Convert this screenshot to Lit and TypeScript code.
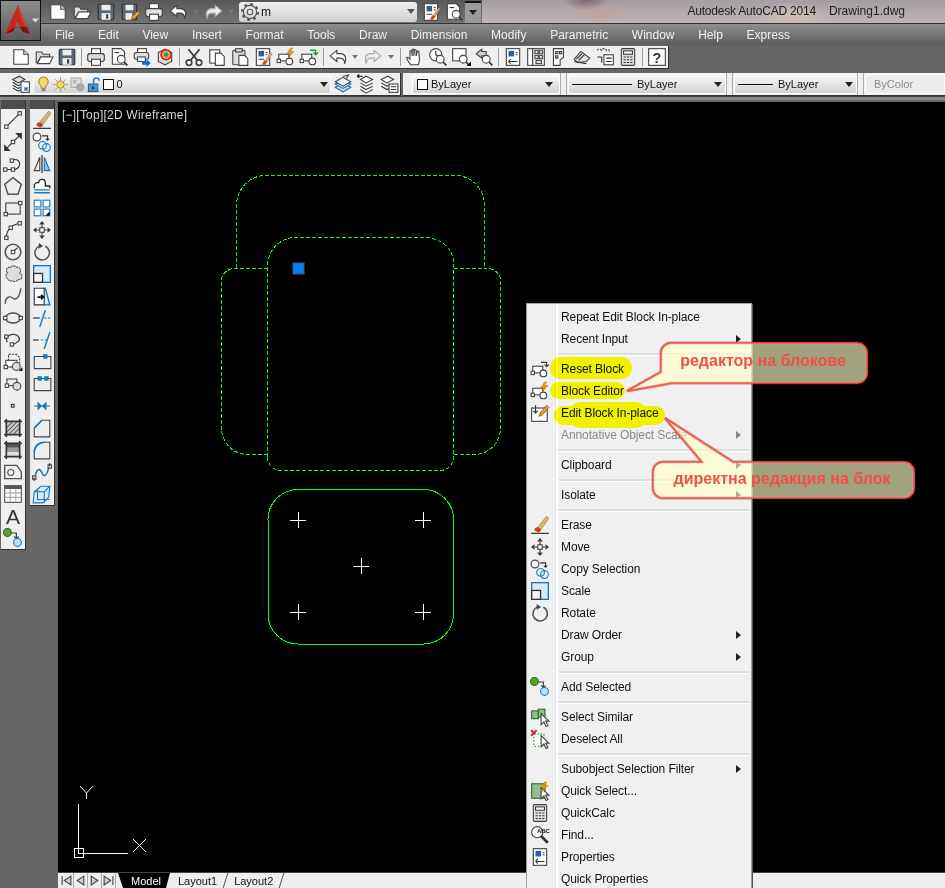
import { LitElement, css, html, svg, TemplateResult } from 'lit';
import { customElement } from 'lit/decorators.js';

const n = (x: number, y: number) => svg`<rect class="w" x=${x - 1.5} y=${y - 1.5} width="3" height="3" />`;
const lens = svg`<circle class="w" cx="11" cy="11" r="3.5" /><path class="k2" d="M13.5 13.5l3 3" />`;
const cursor = svg`<path class="w" d="M10 6v10l2.5-2.5 2 4 1.6-.8-2-4H17z" />`;
const sheet = svg`<rect class="w" x="3" y="1.5" width="12" height="15" /><rect x="5" y="3.5" width="5" height="5" fill="#2a5f9e" />`;
const brush = svg`<path d="M9 15l2-3 5-7 1 1-4 7z" fill="#d9b27a" stroke="#8a6a3a" stroke-width=".5" /><path d="M8 16l2-4 3 1-2 3z" fill="#c8501a" />`;
const bolt = svg`<path d="M13 1l-3 5h3l-2 4 5-6h-3l2-3z" fill="#f0a010" stroke="#b86a00" stroke-width=".5" />`;

const ICONS: Record<string, TemplateResult> = {
  new: svg`<path class="w" d="M2.5 2.5h9l4 4v9h-13z" /><path class="g" d="M11.5 2.5v4h4" />`,
  open: svg`<path class="g" d="M2 14V4.5h5l1 2h6V9H6l-3 5z" /><path class="w" d="M3 15l3-6h11l-3 6z" />`,
  save: svg`<rect x="2" y="2" width="14" height="14" rx="1" fill="#59697a" stroke="#333" /><rect x="5" y="2.5" width="8" height="5" fill="#eee" /><rect x="5" y="10" width="8" height="6" fill="#eee" /><rect x="9" y="11" width="2" height="4" fill="#444" />`,
  saveas: svg`<rect x="2" y="2" width="13" height="14" rx="1" fill="#59697a" stroke="#333" /><rect x="5" y="2.5" width="7" height="5" fill="#eee" /><rect x="5" y="10" width="6" height="6" fill="#eee" /><path d="M10 16l1-3 5-5 2 2-5 5z" fill="#e8a030" stroke="#7a4a10" stroke-width=".6" />`,
  print: svg`<rect class="w" x="5" y="1.5" width="8" height="5" /><rect class="g" x="1.5" y="6" width="15" height="7" rx="2" /><rect class="w" x="5" y="11" width="8" height="5.5" />`,
  undo: svg`<path class="w" d="M8 3L2 8l6 5v-3h3c2 0 4 1 4 5 2-4 1-9-4-9H8z" />`,
  redo: svg`<path d="M10 3l6 5-6 5v-3H7c-2 0-4 1-4 5-2-4-1-9 4-9h3z" fill="#eee" stroke="#aaa" />`,
  gear: svg`<circle cx="9" cy="9" r="7" fill="none" stroke="#555" stroke-width="2.2" stroke-dasharray="2.4 3.1" /><circle cx="9" cy="9" r="6" style="fill:none;stroke:#555" /><circle cx="9" cy="9" r="2.5" style="fill:none;stroke:#555" />`,
  match: svg`${sheet}<path class="k" d="M11.5 5H13M11.5 7H13M5 11h5" />${brush}`,
  preview: svg`<path class="w" d="M3 1.5h8l3 3v11H3z" /><path class="k" d="M5 5h4" />${lens}`,
  publish: svg`<rect class="w" x="5" y="1.5" width="8" height="4" /><rect class="g" x="2" y="5" width="13" height="6" rx="2" /><rect class="w" x="5" y="9" width="7" height="4" /><path d="M9 13h4v-2l4 3.5-4 3.5v-2H9z" fill="#1a6fc0" />`,
  dwf: svg`<path class="g" d="M3 5l6-3 6 3v8l-6 3-6-3z" /><circle cx="10" cy="7" r="4.5" fill="#f0b020" stroke="#d02020" stroke-width="1.4" /><circle cx="10" cy="7" r="2" fill="#2a80d0" />`,
  cut: svg`<path class="k2" d="M4 2l8 10M14 2L6 12" /><circle cx="4.5" cy="14" r="2.5" class="w" style="stroke-width:1.6" /><circle cx="13.5" cy="14" r="2.5" class="w" style="stroke-width:1.6" />`,
  copy: svg`<rect class="w" x="2.5" y="2.5" width="9" height="12" /><path class="w" d="M7.5 5.5h5l3 3v8h-8z" />`,
  paste: svg`<rect class="g" x="2.5" y="3" width="11" height="13" rx="1" /><rect class="g" x="5" y="1.5" width="6" height="3" /><path class="w" d="M8 7.5h5l3 3v6H8z" />`,
  bedit: svg`<rect class="w" x="2.5" y="6.5" width="9" height="6" /><circle class="w" cx="12" cy="13" r="3" />${n(2.5, 12.5)}${bolt}`,
  breset: svg`<rect class="w" x="2.5" y="6.5" width="9" height="6" /><circle class="w" cx="12" cy="13" r="3" />${n(2.5, 12.5)}<path d="M10 3h5v3m-2-1l2 2 2-2" fill="none" stroke="#2a9a30" stroke-width="1.3" />`,
  resetm: svg`<rect class="w" x="2.5" y="6.5" width="9" height="6" /><circle class="w" cx="12" cy="13" r="3" />${n(2.5, 12.5)}<path class="k" d="M10 3h5v3m-2-1l2 2 2-2" />`,
  refedit: svg`<rect class="w" x="1.5" y="4.5" width="14" height="12" /><path class="k" d="M5 2v7m-2-2l2 2 2-2" /><path d="M8 12l1-3 6-7 2 2-6 7z" fill="#e0a030" stroke="#7a4a10" stroke-width=".6" />`,
  pan: svg`<path class="w" d="M5 16c-1-2-3-4-3.500-6 0-1 1-1 2 0l1 1V4c0-1 1.500-1 1.500 0l.5 4V2.500c0-1 1.500-1 1.500 0V8l.5-5c0-1 1.500-1 1.500 0l0 5 1-3.500c0-1 1.500-1 1.500 0L13 11c0 2-.5 3.500-1 5z" />`,
  zoomrt: svg`<circle class="w" cx="7" cy="7" r="5.500" /><path class="k" d="M7 3.500V7l2.500 1" />${lens}`,
  zoomwin: svg`<rect class="w" x="1.500" y="1.500" width="12" height="11" />${lens}<path d="M14 17l4-4v4z" fill="#111" />`,
  zoomprev: svg`<path d="M2 6l5-4v2h4v4H7v2z" fill="#ccc" stroke="#444" />${lens}`,
  props: svg`${sheet}<path class="k" d="M11.500 5H13M11.500 7H13M5 13h8M5 13l2-2M5 13l2 2" />`,
  dc: svg`<rect class="w" x="1.500" y="1.500" width="15" height="15" /><path class="k" d="M6 1.500v15" /><rect class="g" x="8" y="3" width="3" height="3" /><rect class="g" x="12" y="3" width="3" height="3" /><rect class="g" x="8" y="7.500" width="3" height="3" /><rect class="g" x="12" y="7.500" width="3" height="3" /><rect class="g" x="9" y="12" width="5" height="3" />`,
  palette: svg`<path class="w" d="M4 1.500h9v8l-3 2v5H4z" /><path class="g" d="M6 4h2v2H6zM9.500 4h2v2h-2zM6 8h2v2H6z" />`,
  sheetset: svg`<path class="g" d="M2 11l6-7 8 6-3 3-8 1z" /><path class="k" d="M4 11l5-5M6 12l5-5M2 13l11 2" />`,
  markup: svg`<path d="M2 3c1-2 3-1 4 0 1-2 3-2 4 0 1-1 3-1 3 1" fill="none" stroke="#444" stroke-dasharray="2 1" /><rect class="w" x="8" y="7" width="8.500" height="9" /><path class="k" d="M10 10h5M10 13h5M2 9h4v5" />`,
  calc: svg`<rect class="g" x="3" y="1.500" width="12" height="15" rx="1" /><rect class="w" x="5" y="3.500" width="8" height="3" /><path class="k" stroke-dasharray="2 1" d="M5 9h8M5 11.500h8M5 14h8" />`,
  help: svg`<rect class="w" x="1.500" y="1.500" width="15" height="15" /><text x="9" y="14" text-anchor="middle" font-size="13" font-weight="700" font-family="Liberation Sans" fill="#333">?</text>`,
  layerprops: svg`<path class="g" d="M1.500 5l6-3 5 3-6 3z" /><path class="k" d="M1.500 7.500l5 3 2-1M1.500 10l5 3 2-1M1.500 12.500l5 3 2-1" /><rect class="w" x="9" y="7" width="7.500" height="9.500" /><rect x="12" y="12" width="3" height="3" fill="#2a6fb8" />`,
  bulb: svg`<path d="M9 1a5 5 0 0 1 3 9l-1 3H7l-1-3a5 5 0 0 1 3-9z" fill="#f5d96a" stroke="#8a7a30" /><rect x="7" y="13" width="4" height="3" fill="#888" />`,
  sun: svg`<circle cx="9" cy="9" r="4" fill="#f6d65a" stroke="#9a8a40" /><path d="M9 1v3M9 14v3M1 9h3M14 9h3M3.500 3.500l2 2M12.500 12.500l2 2M3.500 14.500l2-2M12.500 5.500l2-2" stroke="#b09a50" />`,
  freeze: svg`<rect x="2" y="2" width="11" height="10" fill="#ddd" stroke="#aaa" /><rect x="4" y="4" width="4" height="4" fill="#bbb" /><circle cx="12" cy="12" r="4" fill="#aaa" stroke="#999" stroke-dasharray="2 1" />`,
  lock: svg`<path d="M8 9V5a3 3 0 0 1 6 0" fill="none" stroke="#2a7fc9" stroke-width="1.600" /><rect x="2.500" y="8.500" width="10" height="8" fill="#4a94d0" stroke="#1a5a98" /><rect x="6.500" y="11" width="2" height="3" fill="#0d3a68" />`,
  layerblue: svg`<path d="M2 12l7-4 7 4-7 4z" fill="#bfe0f8" stroke="#1a6fc0" /><path d="M2 9l7-4 7 4-7 4z" fill="#dff0fc" stroke="#1a6fc0" /><path d="M2 7l7-4 7 4-7 4z" fill="#eaf6ff" stroke="#444" /><path d="M9 2l5-1-2 3" fill="none" stroke="#444" />`,
  layerprev: svg`<path d="M4 5l5 3 6-3-6-3z M4 8l5 3 6-3M4 11l5 3 6-3M4 14l5 3 6-3" class="g" style="fill:#fff" /><path d="M1 2h5M1 2l2-1.500M1 2l2 1.500" stroke="#111" fill="none" />`,
  layerstate: svg`<path class="w" d="M2 5l6-3 5 3-6 3z" /><path class="k" d="M2 8l5 3 2-1M2 11l5 3 2-1" /><rect class="w" x="9" y="9" width="8" height="7.500" /><path class="k" d="M10.500 11.500h5M10.500 14h5" />`,

  line: svg`<path class="k" d="M3 15L15 3" />${n(3, 15)}${n(15, 3)}`,
  xline: svg`<path class="k" d="M3 15L15 3" /><path d="M1 17v-6l6 6zM17 1v6l-6-6z" fill="#333" />${n(9, 9)}`,
  pline: svg`<path class="k" d="M2 14h7c2 0 6-1 6-5s-5-5-7-3" />${n(2, 14)}${n(9, 14)}${n(8, 6)}`,
  polygon: svg`<path d="M9 1.500l7.500 6-3 9h-9l-3-9z" fill="#eee" stroke="#555" stroke-width="1.300" />`,
  rect: svg`<rect class="g" x="2.500" y="4.500" width="13" height="10" style="fill:#eee" />${n(2.5, 14.5)}${n(15.5, 4.5)}`,
  arc: svg`<path class="k" d="M3 16C3 9 8 4 15 3" />${n(3, 16)}${n(7, 7)}${n(15, 3)}`,
  circle: svg`<circle cx="9" cy="9" r="7" fill="#eee" stroke="#555" stroke-width="1.400" /><path class="k" d="M9 9l4-4" />${n(9, 9)}`,
  cloud: svg`<path d="M4 8a3 3 0 0 1 3-5 3 3 0 0 1 5 0 3 3 0 0 1 3 5 3 3 0 0 1-2 6 3 3 0 0 1-5 1 3 3 0 0 1-4-2 3 3 0 0 1 0-5z" fill="#ddd" stroke="#555" stroke-dasharray="2 .6" />`,
  spline: svg`<path d="M2 16C2 9 7 9 9 11s6 0 7-9" fill="none" stroke="#555" stroke-width="1.300" />`,
  ellipse: svg`<ellipse cx="9" cy="9" rx="7" ry="4.500" fill="#eee" stroke="#444" stroke-width="1.200" />${n(2, 9)}${n(16, 9)}`,
  ellarc: svg`<path d="M4 11C1 7 6 3.500 10 4s6 4 4 6-4 3-6 3" fill="none" stroke="#444" stroke-width="1.200" />${n(3, 6)}${n(8, 13)}`,
  insert: svg`<path class="k" d="M5 8V2h7l3 3v5" stroke-dasharray="2 1" /><rect class="w" x="2.500" y="7.500" width="10" height="6" /><circle class="g" cx="12" cy="13" r="3.500" />${n(2.5, 13.5)}<path d="M14 17l3.500-3.500V17z" fill="#111" />`,
  block: svg`<rect class="g" x="3.500" y="4.500" width="9" height="6" style="fill:#eee" /><circle class="g" cx="12.500" cy="11" r="3.500" />${n(3.5, 10.5)}`,
  point: svg`<rect x="7.500" y="7.500" width="2.500" height="2.500" fill="#eee" stroke="#333" />`,
  hatch: svg`<rect x="3" y="3" width="12" height="12" fill="#ccc" /><path stroke="#666" d="M3 9l6-6M3 13l10-10M5 15L15 5M9 15l6-6" /><path class="k2" d="M1 3h16M1 15h16M3 1v16M15 1v16" />`,
  gradient: svg`<rect x="3" y="3" width="12" height="4" fill="#555" /><rect x="3" y="7" width="12" height="4" fill="#999" /><rect x="3" y="11" width="12" height="4" fill="#ddd" /><path class="k2" d="M1 3h16M1 15h16M3 1v16M15 1v16" />`,
  region: svg`<path d="M1.500 3h11l4 6v6h-15z" fill="#eee" stroke="#555" stroke-width="1.200" /><circle cx="7" cy="9.500" r="2.700" fill="#fff" stroke="#555" />`,
  table: svg`<rect x="1.500" y="1.500" width="15" height="15" fill="#fff" stroke="#555" /><rect x="1.500" y="1.500" width="15" height="3" fill="#555" /><path d="M1.500 8h15M1.500 12h15M6.500 4.500v12M11.500 4.500v12" stroke="#aaa" fill="none" />`,
  a: svg`<text x="9" y="16" text-anchor="middle" font-size="19" font-family="Liberation Sans" fill="#333">A</text>`,
  addsel: svg`<circle cx="4" cy="4" r="3.500" fill="#5aa032" stroke="#2a6a10" /><path class="k" d="M8 4.500h4v5m-2-2l2 2 2-2" /><circle cx="13" cy="13" r="3.500" fill="#bfe0f8" stroke="#1a78c2" />`,

  erase: svg`<path d="M7 11L15 1l2 2-7 10z" fill="#d9b27a" stroke="#8a6a3a" stroke-width=".5" /><path d="M4 14c0-2 1-3 3-3l3 2c0 2-2 2.500-3 2.500z" fill="#c8401a" /><path stroke="#222" d="M1 16.500h16" />`,
  copyobj: svg`<circle class="g" cx="4.500" cy="4.500" r="3.500" style="fill:#fff" /><path class="k" d="M9 3.500h5v4m-1.500-1.500l1.500 1.500 1.500-1.500" /><circle class="b" cx="9.500" cy="12" r="3.500" /><circle class="b" cx="13" cy="14" r="3.500" />`,
  mirror: svg`<path d="M7 3v12H2z" fill="#eee" stroke="#444" /><path d="M11 3v12h5z" fill="#8ec2ea" stroke="#1a78c2" /><path d="M9 1v16" stroke="#222" />`,
  offset: svg`<path d="M2 11V9a3 3 0 0 1 3-3h1a3 3 0 0 1 6 0v3h4v2" fill="#fff" stroke="#222" stroke-width="1.200" /><path class="b" d="M2 15h14M2 12.500h14" style="stroke-width:1.300" />`,
  array: svg`<rect class="b" x="2" y="2" width="6" height="6" style="fill:#fff" /><rect class="b" x="10" y="2" width="6" height="6" style="fill:#fff" /><rect class="b" x="2" y="10" width="6" height="6" style="fill:#fff" /><rect class="b" x="10" y="10" width="6" height="6" style="fill:#fff" /><path d="M12 16l4-4v4z" fill="#111" />`,
  move: svg`<path d="M9 1l2.500 3h-5zM9 17l2.500-3h-5zM1 9l3-2.500v5zM17 9l-3-2.500v5z" fill="#333" /><rect x="7" y="7" width="4" height="4" class="w" /><path class="k" d="M9 4v3M9 11v3M4 9h3M11 9h3" />`,
  rotate: svg`<path d="M7 3.500a6.500 6.500 0 1 0 5 .3" fill="none" stroke="#555" stroke-width="1.400" /><path d="M6 1l4 2.500-4 2.500z" fill="#444" />`,
  scale: svg`<rect class="b" x="1.500" y="1.500" width="15" height="15" style="fill:#d8ebf8;stroke-width:1.200" /><rect x="1.500" y="8.500" width="8" height="8" fill="#f4f4f4" stroke="#333" stroke-width="1.200" />`,
  stretch: svg`<path class="b" d="M11 2h1l4 15H11" style="stroke-width:1.200;fill:#d8ebf8" /><path d="M2 2h9v15H2z" fill="#fff" stroke="#333" /><path d="M5 10h5m-2-2l2.500 2L8 12" stroke="#111" stroke-width="1.500" fill="none" />`,
  trim: svg`<path class="b" d="M7 17L12 2" style="stroke-width:1.300" /><path d="M1 9h6" stroke="#222" /><path d="M11 9h6" stroke="#1a78c2" stroke-dasharray="2 1.500" />`,
  extend: svg`<path class="b" d="M11 17L16 2" style="stroke-width:1.300" /><path d="M1 9h5" stroke="#222" /><path d="M8 9h6" stroke="#1a78c2" stroke-dasharray="2 1.500" />`,
  breakpt: svg`<path d="M2 4v11h15V4z" fill="#eee" stroke="#444" /><rect x="10" y="2" width="4" height="4" fill="#1a78c2" />`,
  break: svg`<path d="M2 4v11h15V4z" fill="#eee" stroke="#444" /><rect x="5" y="2" width="4" height="4" fill="#1a78c2" /><rect x="11" y="2" width="4" height="4" fill="#1a78c2" />`,
  join: svg`<path d="M2 9h14" stroke="#1a78c2" /><path d="M5 5l4 4-4 4zM13 5L9 9l4 4z" fill="#1a78c2" />`,
  chamfer: svg`<path d="M2 9l7-7h7v15H2z" fill="#eee" stroke="#444" /><path class="b" d="M2 9l7-7" style="stroke-width:1.500" />`,
  fillet: svg`<path d="M2 11C2 6 6 2 11 2h5v15H2z" fill="#eee" stroke="#444" /><path class="b" d="M2 11C2 6 6 2 11 2" style="stroke-width:1.500" />`,
  blend: svg`<path class="b" d="M3 12c2-8 5-5 6-2s4 4 6-5" style="stroke-width:1.400" />${n(2, 14)}${n(16, 4)}<path class="k" d="M2 14v3M16 4V1" />`,
  explode: svg`<path class="b" d="M2 7l6-5h8l-1 10-5 5H1z M2 7h9v10M11 7l5-5" style="fill:#d8ebf8" /><path class="b" d="M5 4v10h11" />`,
  selsim: svg`<rect x="1.500" y="3.500" width="6" height="7" fill="#8fc08f" stroke="#2a6a2a" /><rect x="7.500" y="2" width="6" height="7" fill="#8fc08f" stroke="#2a6a2a" />${cursor}`,
  desel: svg`<path d="M1 1l5 5M6 1L1 6" stroke="#d02020" stroke-width="1.800" /><rect x="3.500" y="4.500" width="9" height="11" fill="#fff" stroke="#2a8a2a" stroke-dasharray="1.500 1.500" />${cursor}`,
  qselect: svg`<rect x="1.500" y="2.500" width="12" height="13" fill="#8fc08f" stroke="#2a6a2a" />${cursor}${bolt}`,
  find: svg`<circle class="w" cx="6.500" cy="6.500" r="5" /><path class="k2" d="M10 10l6 6" style="stroke-width:2.500" /><text x="12" y="7" text-anchor="middle" font-size="5.500" font-weight="700" font-family="Liberation Sans" fill="#111">ABC</text>`,
};

const icon = (name: string) => html`<svg class="ic" viewBox="0 0 18 18">${ICONS[name]}</svg>`;

const QAT = ['new', 'open', 'save', 'saveas', 'print', 'undo', 'v', 'redo', 'v'];
const ROW1 = ['new', 'open', 'save', '|', 'print', 'preview', 'publish', 'dwf', '|', 'cut', 'copy', 'paste', 'match', 'bedit', 'breset', '|', 'undo', 'v', 'redo', 'v', '|', 'pan', 'zoomrt', 'zoomwin', 'zoomprev', '|', 'props', 'dc', 'palette', 'sheetset', 'markup', 'calc', '|', 'help'];
const DRAW = ['line', 'xline', 'pline', 'polygon', 'rect', 'arc', 'circle', 'cloud', 'spline', 'ellipse', 'ellarc', 'insert', 'block', 'point', 'hatch', 'gradient', 'region', 'table', 'a', 'addsel'];
const MODIFY = ['erase', 'copyobj', 'mirror', 'offset', 'array', 'move', 'rotate', 'scale', 'stretch', 'trim', 'extend', 'breakpt', 'break', 'join', 'chamfer', 'fillet', 'blend', 'explode'];
const MENUS = ['File', 'Edit', 'View', 'Insert', 'Format', 'Tools', 'Draw', 'Dimension', 'Modify', 'Parametric', 'Window', 'Help', 'Express'];
const GRIPS: [number, number][] = [[298, 520], [423, 520], [361, 566], [298, 612], [423, 612]];

type Item = { label?: string; icon?: string; sub?: boolean; off?: boolean };
const CONTEXT: Item[] = [
  { label: 'Repeat Edit Block In-place' },
  { label: 'Recent Input', sub: true },
  {},
  { label: 'Reset Block', icon: 'resetm' },
  { label: 'Block Editor', icon: 'bedit' },
  { label: 'Edit Block In-place', icon: 'refedit' },
  { label: 'Annotative Object Scale', sub: true, off: true },
  {},
  { label: 'Clipboard', sub: true },
  {},
  { label: 'Isolate', sub: true },
  {},
  { label: 'Erase', icon: 'erase' },
  { label: 'Move', icon: 'move' },
  { label: 'Copy Selection', icon: 'copyobj' },
  { label: 'Scale', icon: 'scale' },
  { label: 'Rotate', icon: 'rotate' },
  { label: 'Draw Order', sub: true },
  { label: 'Group', sub: true },
  {},
  { label: 'Add Selected', icon: 'addsel' },
  {},
  { label: 'Select Similar', icon: 'selsim' },
  { label: 'Deselect All', icon: 'desel' },
  {},
  { label: 'Subobject Selection Filter', sub: true },
  { label: 'Quick Select...', icon: 'qselect' },
  { label: 'QuickCalc', icon: 'calc' },
  { label: 'Find...', icon: 'find' },
  { label: 'Properties', icon: 'props' },
  { label: 'Quick Properties' },
];

@customElement('app-root')
export class AppRoot extends LitElement {
  static styles = css`
    :host {
      display: block;
      position: relative;
      width: 945px;
      height: 888px;
      overflow: hidden;
      background: #666;
      color: #111;
      font: 12px 'Liberation Sans', Arial, sans-serif;
    }

    .ic { width: 20px; height: 20px; display: block; flex: none; overflow: visible; }
    .k { fill: none; stroke: #333; }
    .k2 { fill: none; stroke: #333; stroke-width: 1.5; }
    .w { fill: #fff; stroke: #444; }
    .g { fill: #ddd; stroke: #444; }
    .b { fill: none; stroke: #1a78c2; }

    .titlebar { height: 24px; display: flex; padding-left: 41px; }
    .qat {
      width: 441px;
      display: flex;
      align-items: center;
      padding-left: 5px;
      box-sizing: border-box;
      background: linear-gradient(#585858, #747474);
      border-bottom: 1px solid #333;
    }
    .qat .btn { width: 24px; }
    .qat .drop { width: 11.5px; }
    .qat .wsp ~ .btn { width: 23px; }
    .caption {
      flex: 1;
      display: flex;
      align-items: center;
      justify-content: flex-end;
      gap: 13px;
      padding: 0 40px 2px 0;
      color: #222;
      border-bottom: 1px solid #333;
      background:
        radial-gradient(24px 10px at 104px 0, #7f6570, transparent),
        radial-gradient(34px 12px at 118px 14px, #bfa49c, transparent),
        radial-gradient(40px 14px at 310px 16px, #d2bfb4, transparent),
        linear-gradient(#a59ca2, #bdb6ba);
    }
    .caption span:first-child { letter-spacing: -0.2px; }
    .wsp {
      width: 178px;
      height: 20px;
      margin: 0 2px;
      display: flex;
      align-items: center;
      gap: 1px;
      padding-left: 1px;
      box-sizing: border-box;
      border-radius: 3px;
      background: linear-gradient(#f0f0f0, #cfcfcf);
    }
    .grow { flex: 1; }
    .caret { width: 0; height: 0; border: 4px solid transparent; border-top: 5px solid #222; border-bottom: 0; }
    .wsp .caret { margin-right: 2px; border-top-color: #555; }
    .qatmore {
      width: 16px;
      height: 22px;
      display: grid;
      place-items: center;
      box-sizing: border-box;
      border-top: 2px solid #111;
      background: #9a9a9a;
    }

    .logo {
      position: absolute;
      left: 0;
      top: 0;
      width: 41px;
      height: 41px;
      box-sizing: border-box;
      border: 1px solid #111;
      background: linear-gradient(#8e8e8e, #5a5a5a);
    }

    .menubar {
      height: 21px;
      padding-left: 55px;
      display: flex;
      align-items: center;
      gap: 23.7px;
      color: #f0f0f0;
      background: linear-gradient(#8f8f8f, #5c5c5c);
    }

    .row { display: flex; }
    .row1 { height: 25px; padding-top: 1px; box-sizing: border-box; }
    .row2 { height: 26px; padding-top: 3px; gap: 2px; box-sizing: border-box; }
    .bar {
      display: flex;
      align-items: center;
      height: 22px;
      background: #efefef;
      border-right: 1px solid #333;
      border-bottom: 1px solid #333;
    }
    .grip {
      width: 4px;
      height: 18px;
      margin: 0 3px 0 2px;
      flex: none;
      background: radial-gradient(circle, #555 45%, transparent 50%) 0 0 / 2px 2px;
    }
    .btn { width: 23px; height: 22px; display: grid; place-items: center; flex: none; }
    .sep { width: 6px; display: grid; place-items: center; flex: none; }
    .sep::before { content: ''; width: 1px; height: 18px; background: #999; }
    .drop { width: 12.5px; height: 22px; display: grid; place-items: center; flex: none; }
    .drop .caret { border-top-color: #777; border-width: 3px; border-top-width: 4px; border-bottom: 0; }

    .combo {
      height: 20px;
      display: flex;
      align-items: center;
      box-sizing: border-box;
      padding: 0 6px 0 4px;
      border-radius: 3px;
      font-size: 11px;
      background: linear-gradient(#f8f8f8, #d2d2d2);
      border: 1px solid #fff;
    }
    .combo .ic { width: 17px; height: 17px; }
    .combo.layer { width: 298px; margin-left: 1px; padding: 0 2px 0 0.5px; }
    .combo.color { width: 148px; }
    .combo.ltype { width: 158px; padding: 0 3px; }
    .combo.lweight { width: 123px; padding: 0 3px; }
    .combo.plot { width: 80px; padding-left: 8px; color: #8a8a8a; background: #ececec; border-radius: 3px 0 0 3px; }
    .swatch { width: 11px; height: 11px; box-sizing: border-box; border: 1px solid #111; background: #fff; margin-right: 3px; flex: none; }
    .rule { height: 1px; background: #111; flex: none; margin-right: 5px; }
    .ltype .rule { width: 60px; }
    .lweight .rule { width: 35px; }
    .div {
      width: 8px;
      height: 22px;
      flex: none;
      background: linear-gradient(90deg, #aaa 1px, #efefef 1px, #efefef 6px, #aaa 6px, #aaa 7px, #efefef 7px);
    }
    .bars2 { flex: 1; border-right: 0; }

    .strip { height: 4px; background: #8b8b8b; border-top: 1px solid #444; box-sizing: border-box; }

    .main { display: flex; height: 788px; }
    .dock { width: 58px; padding-left: 1px; display: flex; gap: 4px; align-items: flex-start; box-sizing: border-box; flex: none; }
    .vbar { width: 24px; background: #efefef; border-right: 1px solid #333; border-bottom: 1px solid #333; flex: none; box-sizing: content-box; }
    .vhead {
      height: 9px;
      background: #4c4c4c;
      display: grid;
      place-items: center;
    }
    .vhead::before {
      content: '';
      width: 14px;
      height: 3px;
      background: radial-gradient(circle, #bbb 40%, transparent 50%) 0 0 / 2px 2px;
    }
    .vitem { height: 22px; display: grid; place-items: center; }

    .work { flex: 1; display: flex; flex-direction: column; padding-top: 2px; min-width: 0; }
    .canvas { position: relative; flex: 1; background: #000; overflow: hidden; }
    .canvas svg { display: block; position: absolute; inset: 0; }
    .view {
      position: absolute;
      left: 4px;
      top: 6px;
      color: #d4d4d4;
      white-space: pre;
      letter-spacing: 0.22px;
    }

    .tabs {
      height: 15px;
      display: flex;
      align-items: stretch;
      padding-left: 2px;
      background: #eee;
      border-top: 1px solid #444;
      font-size: 11px;
    }
    .nav { width: 14px; display: grid; place-items: center; border-right: 1px solid #aaa; box-sizing: border-box; }
    .nav svg { width: 11px; height: 11px; }
    .tab { position: relative; display: flex; align-items: center; padding: 0 9px 0 8px; }
    .tab.on { background: #000; color: #fff; margin-left: 2px; padding: 0 9px 0 13px; clip-path: polygon(0 0, 100% 0, calc(100% - 4px) 100%, 5px 100%); }
    .tab:not(.on)::after {
      content: '';
      position: absolute;
      right: 0;
      top: 0;
      bottom: 0;
      width: 1px;
      background: #555;
      transform: skewX(-17deg);
    }

    .ctx {
      position: absolute;
      left: 526px;
      top: 303px;
      width: 226px;
      height: 600px;
      box-sizing: border-box;
      padding-top: 2px;
      letter-spacing: -0.1px;
      background: #f0f0f0;
      border: 1px solid #a0a0a0;
      box-shadow: 1px 1px 0 #555;
    }
    .ctx::before {
      content: '';
      position: absolute;
      left: 28px;
      top: 0;
      bottom: 0;
      width: 2px;
      background: #fff;
      border-left: 1px solid #e2e2e2;
    }
    .mi { height: 22px; display: flex; align-items: center; position: relative; }
    .mi .slot { width: 34px; padding-left: 3px; box-sizing: border-box; flex: none; }
    .mi.off { color: #8a8a8a; }
    .mi .tri { position: absolute; right: 10px; top: 7px; width: 0; height: 0; border: 4px solid transparent; border-left: 5px solid #222; border-right: 0; }
    .mi.off .tri { border-left-color: #888; }
    .ms { height: 8px; margin-left: 30px; display: flex; align-items: center; margin-right: 2px; }
    .ms::before { content: ''; flex: 1; height: 2px; background: #dedede; border-bottom: 1px solid #fff; }

    .marks, .notes { position: absolute; left: 0; top: 0; pointer-events: none; }
    .marks { mix-blend-mode: multiply; }
    .notes text { font: bold 16px 'Liberation Sans', Arial, sans-serif; fill: #ef5148; text-anchor: middle; }
    .box { fill: rgba(255, 255, 200, 0.63); stroke: #ef5a50; stroke-width: 1.5; }
    .edge { fill: none; stroke: rgba(190, 20, 20, 0.5); stroke-width: 3; }
  `;

  private bar(items: string[]) {
    return items.map((it) => {
      if (it === '|') return html`<span class="sep"></span>`;
      if (it === 'v') return html`<span class="drop"><span class="caret"></span></span>`;
      return html`<span class="btn">${icon(it)}</span>`;
    });
  }

  private drawing() {
    return html`<svg width="887" height="771" viewBox="58 102 887 771">
      <g fill="none" stroke="#0f0" stroke-dasharray="4 2" shape-rendering="crispEdges">
        <path d="M236.500 268V205A29 30 0 0 1 265.500 175.500H455.500A29 30 0 0 1 484.500 205V268" />
        <path d="M268 268.500H235A13.500 12 0 0 0 221.500 280.500V428A26 26.500 0 0 0 247.500 454.500H268" />
        <path d="M453.500 268.500H487A13.500 12 0 0 1 500.500 280.500V428A26 26.500 0 0 1 474.500 454.500H453.500" />
        <path d="M267.500 457V266A28 28.500 0 0 1 295.500 237.500H424A29.500 25 0 0 1 453.500 262.500V457A13.500 13.500 0 0 1 440 470.500H281A13.500 13.500 0 0 1 267.500 457Z" />
      </g>
      <rect x="293" y="263" width="11" height="11" fill="#0080ff" stroke="#555" />
      <rect x="268" y="489.500" width="185.500" height="154.500" rx="30" fill="none" stroke="#0f0" shape-rendering="crispEdges" />
      <g stroke="#fff" fill="none" shape-rendering="crispEdges">
        ${GRIPS.map(([x, y]) => svg`<path d="M${x - 8} ${y + 0.5}h16M${x + 0.5} ${y - 8}v16" />`)}
        <path d="M78.500 804V853H128M74.500 848.500h9v9h-9z" />
      </g>
      <g stroke="#fff" fill="none">
        <path d="M80 786l6.500 7 6.500-7M86.500 793v6M133 839l13 13M146 839l-13 13" />
      </g>
    </svg>`;
  }

  private menu() {
    return html`<div class="ctx">
      ${CONTEXT.map((m) =>
        m.label
          ? html`<div class="mi ${m.off ? 'off' : ''}">
              <span class="slot">${m.icon ? icon(m.icon) : ''}</span>
              <span>${m.label}</span>
              ${m.sub ? html`<span class="tri"></span>` : ''}
            </div>`
          : html`<div class="ms"></div>`
      )}
    </div>`;
  }

  private notes() {
    return html`
      <svg class="marks" width="945" height="888" viewBox="0 0 945 888" fill="#ff0">
        <rect x="550" y="357" width="82" height="22" rx="11" />
        <rect x="550" y="382" width="75" height="17" rx="8.500" />
        <rect x="554" y="406" width="111" height="19" rx="9.500" />
        <rect x="568" y="402" width="80" height="26" rx="13" />
      </svg>
      <svg class="notes" width="945" height="888" viewBox="0 0 945 888">
        <path class="edge" d="M671 343H857a10 10 0 0 1 10 10V373a10 10 0 0 1-10 10H672L627 391 661 372V353a10 10 0 0 1 10-10Z" />
        <path class="box" d="M671 343H857a10 10 0 0 1 10 10V373a10 10 0 0 1-10 10H672L627 391 661 372V353a10 10 0 0 1 10-10Z" />
        <text x="763" y="366">редактор на блокове</text>
        <path class="edge" d="M663 462H702L665 418 733 462H904a10 10 0 0 1 10 10V488a10 10 0 0 1-10 10H663a10 10 0 0 1-10-10V472a10 10 0 0 1 10-10Z" />
        <path class="box" d="M663 462H702L665 418 733 462H904a10 10 0 0 1 10 10V488a10 10 0 0 1-10 10H663a10 10 0 0 1-10-10V472a10 10 0 0 1 10-10Z" />
        <text x="782" y="484">директна редакция на блок</text>
      </svg>
    `;
  }

  render() {
    return html`
      <div class="titlebar">
        <div class="qat">
          ${this.bar(QAT)}
          <div class="wsp">${icon('gear')}<span>m</span><span class="grow"></span><span class="caret"></span></div>
          ${this.bar(['match', 'preview'])}
          <div class="qatmore"><span class="caret"></span></div>
        </div>
        <div class="caption"><span>Autodesk AutoCAD 2014</span><span>Drawing1.dwg</span></div>
      </div>
      <div class="menubar">${MENUS.map((m) => html`<span>${m}</span>`)}</div>
      <div class="row row1">
        <div class="bar"><span class="grip"></span>${this.bar(ROW1)}</div>
      </div>
      <div class="row row2">
        <div class="bar">
          <span class="grip"></span><span class="btn">${icon('layerprops')}</span>
          <div class="combo layer">
            ${['bulb', 'sun', 'freeze', 'lock'].map((i) => icon(i))}
            <span class="swatch"></span><span>0</span><span class="grow"></span><span class="caret"></span>
          </div>
          ${this.bar(['layerblue', 'layerprev', 'layerstate'])}
        </div>
        <div class="bar bars2">
          <span class="grip"></span>
          <div class="combo color"><span class="swatch"></span><span>ByLayer</span><span class="grow"></span><span class="caret"></span></div>
          <span class="div"></span>
          <div class="combo ltype"><span class="rule"></span><span>ByLayer</span><span class="grow"></span><span class="caret"></span></div>
          <span class="div"></span>
          <div class="combo lweight"><span class="rule"></span><span>ByLayer</span><span class="grow"></span><span class="caret"></span></div>
          <span class="div"></span>
          <div class="combo plot">ByColor</div>
        </div>
      </div>
      <div class="strip"></div>
      <div class="main">
        <div class="dock">
          <div class="vbar"><div class="vhead"></div>${DRAW.map((i) => html`<div class="vitem">${icon(i)}</div>`)}</div>
          <div class="vbar"><div class="vhead"></div>${MODIFY.map((i) => html`<div class="vitem">${icon(i)}</div>`)}</div>
        </div>
        <div class="work">
          <div class="canvas">
            ${this.drawing()}
            <div class="view">[−][Top][2D Wireframe]</div>
          </div>
          <div class="tabs">
            ${['M1 1v8M9 1L3 5l6 4z', 'M8 1L2 5l6 4z', 'M2 1l6 4-6 4z', 'M1 1l6 4-6 4zM9 1v8'].map(
              (d) => html`<span class="nav"><svg viewBox="0 0 10 10"><path d=${d} fill="#ccc" stroke="#444" /></svg></span>`
            )}
            <span class="tab on">Model</span>
            <span class="tab">Layout1</span>
            <span class="tab">Layout2</span>
          </div>
        </div>
      </div>
      <div class="logo">
        <svg width="39" height="39" viewBox="0 0 38 38">
          <path d="M16.500 4L4 32l8-2 4-10 5 10 7 2z" fill="#c6281c" />
          <path d="M4 32l8-6 14-1 2 7-7-2-2-4-5 0-3 4z" fill="#7a1210" />
          <path d="M16.500 4l3 14 8.500 14z" fill="#e04a30" opacity=".6" />
          <path d="M30 17h7l-3.500 4z" fill="#ddd" />
        </svg>
      </div>
      ${this.menu()}
      ${this.notes()}
    `;
  }
}
